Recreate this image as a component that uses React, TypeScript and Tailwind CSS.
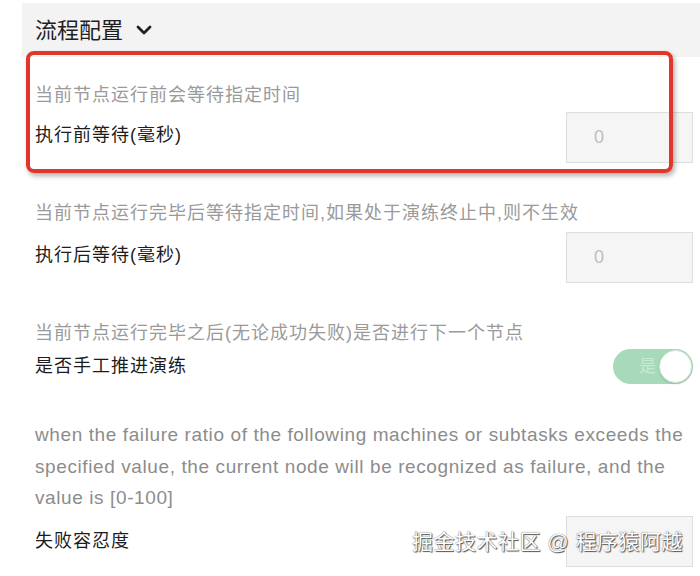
import { ChevronDown } from "lucide-react";

const font = "font-['Liberation_Sans','Noto_Sans_CJK_SC',sans-serif]";

function NumInput() {
  return (
    <div className="w-[127px] h-[51px] bg-[#f5f5f5] border border-[#dedede] flex items-center pl-[27px] text-[18px] text-[#bdbdbd]">
      0
    </div>
  );
}

export default function App() {
  return (
    <div className={`relative w-[700px] h-[576px] bg-white overflow-hidden ${font}`}>
      <div className="pt-[3px] pl-[22px]">
        {/* 标题栏 */}
        <div className="h-[54px] bg-[#f3f3f3] flex items-center pl-[13px] gap-[9px] text-[22px] text-[#1f1f1f]">
          <span>流程配置</span>
          <ChevronDown size={24} strokeWidth={2.8} className="text-[#222]" />
        </div>

        <div className="pl-[13px] pr-[7px]">
          {/* 执行前等待 */}
          <p className="mt-[26px] text-[18px] leading-[24px] tracking-[1px] text-[#9a9a9a]">当前节点运行前会等待指定时间</p>
          <div className="mt-[5px] flex items-center justify-between">
            <span className="text-[18px] tracking-[1px] text-[#1c1c1c] -mt-[5px]">执行前等待(毫秒)</span>
            <NumInput />
          </div>

          {/* 执行后等待 */}
          <p className="mt-[38px] text-[18px] leading-[24px] tracking-[1px] text-[#9a9a9a]">
            当前节点运行完毕后等待指定时间,如果处于演练终止中,则不生效
          </p>
          <div className="mt-[7px] flex items-center justify-between">
            <span className="text-[18px] tracking-[1px] text-[#1c1c1c] -mt-[4px]">执行后等待(毫秒)</span>
            <NumInput />
          </div>

          {/* 手工推进 */}
          <p className="mt-[38px] text-[18px] leading-[24px] tracking-[1px] text-[#9a9a9a]">
            当前节点运行完毕之后(无论成功失败)是否进行下一个节点
          </p>
          <div className="mt-[4px] flex items-center justify-between">
            <span className="text-[18px] tracking-[1px] text-[#1c1c1c]">是否手工推进演练</span>
            <div className="w-[80px] h-[35px] rounded-full bg-[#a7dab8] flex items-center justify-between pl-[26px] pr-[1px]">
              <span className="text-[17px] text-[#c9e8d3]">是</span>
              <div className="w-[33px] h-[33px] rounded-full bg-white border border-[#d5e9dc] shadow-sm" />
            </div>
          </div>

          {/* 失败容忍度 */}
          <p className="mt-[35px] text-[19px] leading-[31.5px] tracking-[0.6px] text-[#8c8c8c] whitespace-nowrap">
            when the failure ratio of the following machines or subtasks exceeds the
            <br />
            specified value, the current node will be recognized as failure, and the
            <br />
            value is [0-100]
          </p>
          <div className="mt-[2px] flex items-center justify-between">
            <span className="text-[18px] tracking-[1px] text-[#1c1c1c]">失败容忍度</span>
            <NumInput />
          </div>
        </div>
      </div>

      {/* 红框标注 */}
      <div className="absolute left-[26px] top-[51px] w-[647px] h-[122px] border-[4px] border-[#e2362b] rounded-[8px] shadow-[2px_3px_5px_rgba(0,0,0,0.3)]" />

      {/* 水印 */}
      <div className="absolute left-[412px] top-[526px] text-[21px] tracking-[0.5px] text-white [text-shadow:0_0_1px_#444,1px_1px_1px_#555]">
        掘金技术社区 @ 程序猿阿越
      </div>
    </div>
  );
}
